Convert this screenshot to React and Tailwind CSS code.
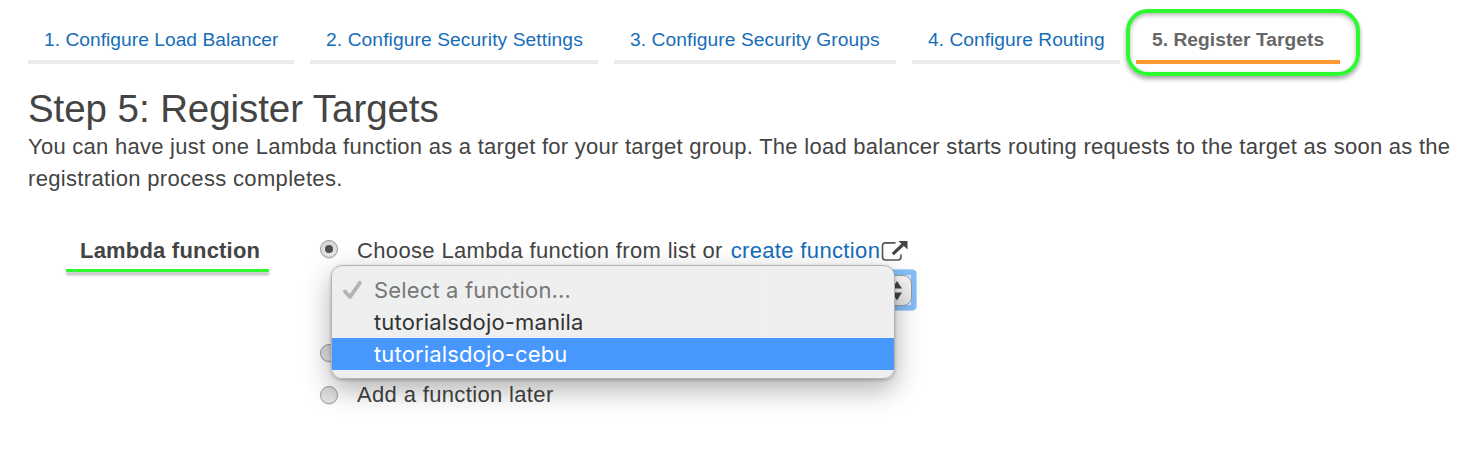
const tabs = [
  { label: "1. Configure Load Balancer", width: "w-[266px]", tracking: "tracking-[0.03px]" },
  { label: "2. Configure Security Settings", width: "w-[288px]", tracking: "tracking-[0.1px]" },
  { label: "3. Configure Security Groups", width: "w-[282px]", tracking: "tracking-[0.08px]" },
  { label: "4. Configure Routing", width: "w-[208px]", tracking: "tracking-[0.03px]" },
];

function Radio({ checked }) {
  return (
    <span className="flex size-[18px] shrink-0 items-center justify-center rounded-full border-[1.5px] border-[#9b9b9b] bg-linear-to-b from-[#d6d6d6] to-[#e6e6e6] shadow-[0_1px_1px_rgba(0,0,0,0.12)]">
      {checked && <span className="size-2 rounded-full bg-[#4f4f4f]" />}
    </span>
  );
}

function ExternalIcon() {
  return (
    <svg className="mt-[2px] ml-[1px] h-[22px] w-[27px] shrink-0" viewBox="0 0 27 22" fill="none">
      <path d="M14.5 2.9H4.5Q1.5 2.9 1.5 6V16.8Q1.5 20 4.5 20H16.8Q20 20 20 16.8V14.5" stroke="#555" strokeWidth="1.6" />
      <path d="M11.8 14.2L22 4.5" stroke="#444" strokeWidth="3.2" />
      <path d="M17.5 1H26.5V9.5Z" fill="#444" />
    </svg>
  );
}

function Menu() {
  return (
    <div className="absolute top-[31px] left-[11px] z-10 h-[114px] w-[564px] rounded-[11px] border border-[#b4b4b4] bg-linear-to-r from-[#edefef] to-[#efefef] to-30% pt-[8px] font-['Inter',sans-serif] text-[22px] leading-8 tracking-[0.15px] text-[#333] shadow-[0_10px_28px_rgba(0,0,0,0.32),0_1px_3px_rgba(0,0,0,0.25)]">
      <div className="flex h-8 items-center text-[#777]">
        <svg className="mr-[11px] ml-[11px] h-[20px] w-5" viewBox="0 0 20 20" fill="none">
          <path d="M2 11.5L7 17L16.8 2.8" stroke="#b3b3b3" strokeWidth="3.8" strokeLinejoin="round" strokeLinecap="round" />
        </svg>
        <span className="whitespace-nowrap">Select a function...</span>
      </div>
      <div className="h-8 pl-[42px] whitespace-nowrap">tutorialsdojo-manila</div>
      <div className="h-8 bg-[#4797fc] pl-[42px] whitespace-nowrap text-white">tutorialsdojo-cebu</div>
    </div>
  );
}

export default function App() {
  return (
    <div className="h-[468px] w-[1480px] overflow-hidden bg-white pl-7 font-['Liberation_Sans',Arial,sans-serif] text-[22px] text-[#444]">
      <nav className="flex h-[64px] gap-4 pt-[18px] text-[19.2px] leading-[44px]">
        {tabs.map((t) => (
          <a key={t.label} className={`${t.width} ${t.tracking} h-[46px] border-b-4 border-[#ebebeb] pl-4 whitespace-nowrap text-[#166db8]`}>
            {t.label}
          </a>
        ))}
        <div className="relative h-[46px] w-[204px] border-b-4 border-[#ff9830] pl-4 font-bold tracking-[0.04px] whitespace-nowrap text-[#666]">
          5. Register Targets
          <span className="absolute -top-[9px] -left-[10px] h-[67px] w-[234px] rounded-[22px] border-4 border-[#2afa2e] shadow-[0_3px_4px_rgba(0,0,0,0.35),inset_0_2px_4px_rgba(0,0,0,0.3)]" />
        </div>
      </nav>
      <h1 className="mt-[23px] text-[38.5px] leading-[44px] tracking-[-0.07px] whitespace-nowrap">Step 5: Register Targets</h1>
      <p className="leading-8 tracking-[0.265px] whitespace-nowrap">
        You can have just one Lambda function as a target for your target group. The load balancer starts routing requests to the target as soon as the
        <br />
        <span className="tracking-[0.33px]">registration process completes.</span>
      </p>
      <section className="mt-[39px] flex">
        <div className="ml-[38px] w-[203px]">
          <div className="h-[35px] pl-[14px] leading-[34px] font-bold tracking-[0.2px] whitespace-nowrap">Lambda function</div>
          <div className="h-[3px] bg-[#2afa2e] shadow-[0_3px_3px_rgba(0,0,0,0.3)]" />
        </div>
        <div className="relative ml-[51px] w-[600px] tracking-[0.35px]">
          <div className="flex h-8 items-center">
            <div className="pb-[2px]">
              <Radio checked />
            </div>
            <span className="ml-[19px] whitespace-nowrap">Choose Lambda function from list or</span>
            <a className="ml-2 whitespace-nowrap text-[#166db8]">create function</a>
            <ExternalIcon />
          </div>
          <div className="mt-[3px] ml-[31px] h-[42px] w-[566px] rounded-[5px] border border-[#b5d9fb]">
            <div className="h-10 rounded-[3px] border-[5px] border-[#84bef9] bg-[#d3e7fc] pb-px">
              <div className="-mr-px flex h-[31px] items-center justify-end rounded-[9px] border-[1.5px] border-[#999] bg-linear-to-b from-[#fafafa] to-[#e8e8e8] pr-[8px]">
                <svg className="h-5 w-3" viewBox="0 0 12 20" fill="#444">
                  <path d="M6 0L11 7.5H1ZM6 19.5L11 11.5H1Z" />
                </svg>
              </div>
            </div>
          </div>
          <div className="mt-[26px] flex h-8 items-center">
            <Radio />
          </div>
          <div className="mt-[9px] flex h-8 items-center">
            <div className="pt-[2px]">
              <Radio />
            </div>
            <span className="ml-[19px] whitespace-nowrap">Add a function later</span>
          </div>
          <Menu />
        </div>
      </section>
    </div>
  );
}
